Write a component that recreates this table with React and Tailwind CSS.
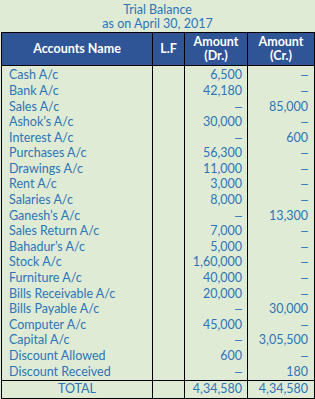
import React from 'react';

const rows = [
  ['Cash A/c', '6,500', '–'],
  ['Bank A/c', '42,180', '–'],
  ['Sales A/c', '–', '85,000'],
  ['Ashok’s A/c', '30,000', '–'],
  ['Interest A/c', '–', '600'],
  ['Purchases A/c', '56,300', '–'],
  ['Drawings A/c', '11,000', '–'],
  ['Rent A/c', '3,000', '–'],
  ['Salaries A/c', '8,000', '–'],
  ['Ganesh’s A/c', '–', '13,300'],
  ['Sales Return A/c', '7,000', '–'],
  ['Bahadur’s A/c', '5,000', '–'],
  ['Stock A/c', '1,60,000', '–'],
  ['Furniture A/c', '40,000', '–'],
  ['Bills Receivable A/c', '20,000', '–'],
  ['Bills Payable A/c', '–', '30,000'],
  ['Computer A/c', '45,000', '–'],
  ['Capital A/c', '–', '3,05,500'],
  ['Discount Allowed', '600', '–'],
  ['Discount Received', '–', '180'],
];

const Amount = ({ value }) =>
  value === '–' ? <span className="font-['Liberation_Sans']">–</span> : value;

export default function App() {
  return (
    <div className="w-[315px] h-[399px] bg-[#dfebd5] text-[#2e75b6] overflow-hidden" style={{ fontFamily: 'Lato, "Liberation Sans", sans-serif' }}>
      {/* Title */}
      <div className="pt-[3px] text-center text-[12.5px] leading-[14px]">
        <p>Trial Balance</p>
        <p>as on April 30, 2017</p>
      </div>

      <table className="ml-[1px] mt-[1px] w-[313px] border-collapse border border-black table-fixed text-[12.5px]">
        <colgroup>
          <col className="w-[151px]" />
          <col className="w-[32px]" />
          <col className="w-[63px]" />
          <col className="w-[67px]" />
        </colgroup>
        <thead>
          <tr className="bg-[#2f5597] text-white font-bold leading-[14px]">
            <th className="border border-black h-[33px] p-0">Accounts Name</th>
            <th className="border border-black p-0">L.F</th>
            <th className="border border-black p-0">Amount<br />(Dr.)</th>
            <th className="border border-black p-0">Amount<br />(Cr.)</th>
          </tr>
        </thead>
        <tbody>
          {rows.map(([name, dr, cr], i) => {
            const h = i === 0 ? 'h-[17.5px] pt-[2px]' : 'h-[15.6px]';
            return (
              <tr key={name}>
                <td className="border-l border-r border-black p-0">
                  <div className={`${h} flex items-center pl-[7px] whitespace-nowrap`}>{name}</div>
                </td>
                <td className="border-l border-r border-black p-0"></td>
                <td className="border-l border-r border-black p-0">
                  <div className={`${h} flex items-center justify-end pr-[5px]`}><Amount value={dr} /></div>
                </td>
                <td className="border-l border-r border-black p-0">
                  <div className={`${h} flex items-center justify-end pr-[6px]`}><Amount value={cr} /></div>
                </td>
              </tr>
            );
          })}
          <tr className="border-t border-black">
            <td className="border border-black p-0">
              <div className="h-[17px] flex items-center justify-center">TOTAL</div>
            </td>
            <td className="border border-black p-0"></td>
            <td className="border border-black p-0">
              <div className="h-[17px] flex items-center justify-end pr-[5px]">4,34,580</div>
            </td>
            <td className="border border-black p-0">
              <div className="h-[17px] flex items-center justify-end pr-[6px]">4,34,580</div>
            </td>
          </tr>
        </tbody>
      </table>
    </div>
  );
}
